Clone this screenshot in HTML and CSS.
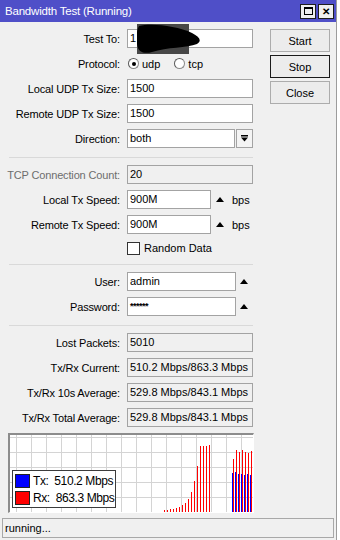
FILE: index.html
```html
<!DOCTYPE html>
<html>
<head>
    <title>Bandwidth Test (Running)</title>
    <link rel="stylesheet" href="styles.css">
</head>
<body>
    <div class="window">
        <div class="titlebar">
            <span class="title">Bandwidth Test (Running)</span>
            <div class="title-buttons">
                <span class="tb-btn"><span class="max-icon"></span></span>
                <span class="tb-btn close">&#x2715;</span>
            </div>
        </div>

        <div class="main">
            <div class="form">
                <div class="row">
                    <span class="label">Test To:</span>
                    <div class="control">
                        <div class="field full redacted">1
                            <svg class="scribble" width="66" height="31" viewBox="0 0 66 31">
                                <rect x="0" y="0" width="52" height="30" fill="#474747"/>
                                <path d="M2,2 C15,-1 40,2 55,9 C63,13 65,17 60,20 C50,24 30,23 15,28 C8,30 1,29 0,20 C-1,12 0,5 2,2 Z" fill="#000"/>
                            </svg>
                        </div>
                    </div>
                </div>
                <div class="row">
                    <span class="label">Protocol:</span>
                    <div class="control">
                        <span class="radio checked"></span><span class="radio-text">udp</span>
                        <span class="radio"></span><span class="radio-text">tcp</span>
                    </div>
                </div>
                <div class="row">
                    <span class="label">Local UDP Tx Size:</span>
                    <div class="control"><div class="field full">1500</div></div>
                </div>
                <div class="row">
                    <span class="label">Remote UDP Tx Size:</span>
                    <div class="control"><div class="field full">1500</div></div>
                </div>
                <div class="row">
                    <span class="label">Direction:</span>
                    <div class="control">
                        <div class="field select">both</div>
                        <span class="drop-btn">
                            <svg width="7" height="7" viewBox="0 0 7 7">
                                <rect x="0" y="0" width="7" height="1.5" fill="#000"/>
                                <polygon points="0,2.5 7,2.5 3.5,6.5" fill="#000"/>
                            </svg>
                        </span>
                    </div>
                </div>

                <div class="sep"></div>

                <div class="row">
                    <span class="label disabled">TCP Connection Count:</span>
                    <div class="control"><div class="field full readonly">20</div></div>
                </div>
                <div class="row">
                    <span class="label">Local Tx Speed:</span>
                    <div class="control">
                        <div class="field speed">900M</div>
                        <span class="up-arrow"></span><span class="unit">bps</span>
                    </div>
                </div>
                <div class="row">
                    <span class="label">Remote Tx Speed:</span>
                    <div class="control">
                        <div class="field speed">900M</div>
                        <span class="up-arrow"></span><span class="unit">bps</span>
                    </div>
                </div>
                <div class="row check-row">
                    <span class="label"></span>
                    <div class="control">
                        <span class="checkbox"></span><span class="check-text">Random Data</span>
                    </div>
                </div>

                <div class="sep"></div>

                <div class="row">
                    <span class="label">User:</span>
                    <div class="control">
                        <div class="field login">admin</div>
                        <span class="up-arrow short"></span>
                    </div>
                </div>
                <div class="row">
                    <span class="label">Password:</span>
                    <div class="control">
                        <div class="field login password">******</div>
                        <span class="up-arrow short"></span>
                    </div>
                </div>

                <div class="sep"></div>

                <div class="row">
                    <span class="label">Lost Packets:</span>
                    <div class="control"><div class="field full readonly">5010</div></div>
                </div>
                <div class="row">
                    <span class="label">Tx/Rx Current:</span>
                    <div class="control"><div class="field full readonly">510.2 Mbps/863.3 Mbps</div></div>
                </div>
                <div class="row">
                    <span class="label">Tx/Rx 10s Average:</span>
                    <div class="control"><div class="field full readonly">529.8 Mbps/843.1 Mbps</div></div>
                </div>
                <div class="row">
                    <span class="label">Tx/Rx Total Average:</span>
                    <div class="control"><div class="field full readonly">529.8 Mbps/843.1 Mbps</div></div>
                </div>

                <div class="graph">
                    <svg width="243" height="77" viewBox="0 0 243 77">
                        <g stroke="#d4d4d4" stroke-width="1">
                            <path d="M6.5,0V77M21.5,0V77M36.5,0V77M51.5,0V77M66.5,0V77M81.5,0V77M96.5,0V77M111.5,0V77M126.5,0V77M141.5,0V77M156.5,0V77M171.5,0V77M186.5,0V77M201.5,0V77M216.5,0V77M231.5,0V77"/>
                            <path d="M0,2.5H243M0,17.5H243M0,32.5H243M0,47.5H243M0,62.5H243"/>
                        </g>
                        <g fill="#ff0000">
                            <rect x="154" y="75" width="1" height="2"/>
                            <rect x="157" y="75" width="1" height="2"/>
                            <rect x="160" y="74" width="1" height="3"/>
                            <rect x="163" y="74" width="1" height="3"/>
                            <rect x="166" y="73" width="1" height="4"/>
                            <rect x="169" y="72" width="1" height="5"/>
                            <rect x="172" y="70" width="1" height="7"/>
                            <rect x="175" y="68" width="1" height="9"/>
                            <rect x="178" y="64" width="1" height="13"/>
                            <rect x="181" y="57" width="1" height="20"/>
                            <rect x="184" y="46" width="1" height="31"/>
                            <rect x="187" y="31" width="1" height="46"/>
                            <rect x="190" y="11" width="1" height="66"/>
                            <rect x="193" y="11" width="1" height="66"/>
                            <rect x="196" y="11" width="1" height="66"/>
                            <rect x="199" y="10" width="1" height="67"/>
                            <rect x="223" y="24" width="1" height="53"/>
                            <rect x="226" y="15" width="1" height="62"/>
                            <rect x="229" y="17" width="1" height="60"/>
                            <rect x="232" y="15" width="1" height="62"/>
                            <rect x="235" y="17" width="1" height="60"/>
                            <rect x="238" y="18" width="1" height="59"/>
                            <rect x="241" y="16" width="1" height="61"/>
                        </g>
                        <g fill="#0000ff">
                            <rect x="222" y="38" width="1" height="39"/>
                            <rect x="225" y="37" width="1" height="40"/>
                            <rect x="228" y="39" width="1" height="38"/>
                            <rect x="231" y="39" width="1" height="38"/>
                            <rect x="234" y="40" width="1" height="37"/>
                            <rect x="237" y="39" width="1" height="38"/>
                            <rect x="240" y="40" width="1" height="37"/>
                        </g>
                    </svg>
                    <div class="legend">
                        <div class="legend-item"><span class="swatch tx"></span><span class="legend-text">Tx:  510.2 Mbps</span></div>
                        <div class="legend-item"><span class="swatch rx"></span><span class="legend-text">Rx:  863.3 Mbps</span></div>
                    </div>
                </div>
            </div>

            <div class="actions">
                <button>Start</button>
                <button class="default">Stop</button>
                <button>Close</button>
            </div>
        </div>

        <div class="status">running...</div>
    </div>
</body>
</html>
```

FILE: styles.css
```css
body {
    margin: 0;
    background: #fff;
    font-family: "Liberation Sans", Arial, sans-serif;
    font-size: 11px;
    color: #000;
}

.window {
    width: 336px;
    height: 540px;
    background: #f0f0f0;
    border-right: 1px solid #9c9c9c;
    display: flex;
    flex-direction: column;
}

.titlebar {
    height: 22px;
    flex-shrink: 0;
    background: #4f4fc8;
    color: #fff;
    display: flex;
    align-items: center;
    justify-content: space-between;
    padding: 0 2px 0 5px;
}

.title {
    font-size: 11.5px;
    letter-spacing: -0.2px;
}

.title-buttons {
    display: flex;
    gap: 2px;
}

.tb-btn {
    width: 16px;
    height: 15px;
    box-sizing: border-box;
    border: 1px solid #1e1e1e;
    background: #f0f0f0;
    color: #000;
    display: flex;
    align-items: center;
    justify-content: center;
    font-size: 10px;
    font-weight: bold;
}

.max-icon {
    width: 9px;
    height: 8px;
    box-sizing: border-box;
    border: 1px solid #000;
    border-top-width: 2px;
}

.main {
    flex: 1;
    display: flex;
    padding-top: 7px;
}

.form {
    width: 253px;
    display: flex;
    flex-direction: column;
}

.row {
    display: grid;
    grid-template-columns: 120px 1fr;
    column-gap: 7px;
    align-items: center;
    height: 19px;
    margin-top: 6px;
}

.row:first-child {
    margin-top: 0;
}

.label {
    text-align: right;
    white-space: nowrap;
    letter-spacing: -0.15px;
}

.label.disabled {
    color: #6d6d6d;
}

.control {
    display: flex;
    align-items: center;
}

.field {
    height: 19px;
    box-sizing: border-box;
    border: 1px solid #a3a3a3;
    background: #fff;
    padding-left: 2px;
    line-height: 17px;
    white-space: nowrap;
    overflow: hidden;
}

.field.full { width: 126px; }
.field.select { width: 108px; }
.field.speed { width: 84px; }
.field.login { width: 109px; }

.field.readonly {
    background: #f0f0f0;
}

.field.password {
    font-size: 9px;
    font-weight: bold;
    letter-spacing: -0.5px;
}

.redacted {
    position: relative;
    overflow: visible;
}

.scribble {
    position: absolute;
    left: 9px;
    top: -6px;
}

.radio {
    width: 11px;
    height: 11px;
    box-sizing: border-box;
    border-radius: 50%;
    border: 1px solid #8a8a8a;
    border-top-color: #5a5a5a;
    border-left-color: #5a5a5a;
    background: #fff;
    margin-left: 1px;
    display: flex;
    align-items: center;
    justify-content: center;
}

.radio.checked::after {
    content: "";
    width: 4px;
    height: 4px;
    border-radius: 50%;
    background: #000;
}

.radio-text {
    margin: 0 13px 0 3px;
}

.drop-btn {
    width: 17px;
    height: 19px;
    box-sizing: border-box;
    margin-left: 1px;
    border: 1px solid #a3a3a3;
    background: #f4f4f4;
    display: flex;
    align-items: center;
    justify-content: center;
}

.up-arrow {
    width: 0;
    height: 0;
    border-left: 4.5px solid transparent;
    border-right: 4.5px solid transparent;
    border-bottom: 5px solid #000;
    margin-left: 5px;
}

.up-arrow.short {
    margin-left: 4px;
}

.unit {
    margin-left: 8px;
}

.check-row {
    height: 14px;
    margin-top: 7px;
}

.checkbox {
    width: 13px;
    height: 13px;
    box-sizing: border-box;
    border: 1px solid #333;
    background: #fff;
}

.check-text {
    margin-left: 4px;
}

.sep {
    height: 1px;
    background: #d9d9d9;
    margin: 9px 0 1px 9px;
}

.graph {
    position: relative;
    width: 246px;
    height: 80px;
    box-sizing: border-box;
    margin: 6px 0 0 8px;
    border-top: 2px solid #8c8c8c;
    border-left: 2px solid #8c8c8c;
    border-right: 1px solid #fff;
    border-bottom: 1px solid #fff;
    background: #fff;
}

.graph svg {
    display: block;
}

.legend {
    position: absolute;
    left: 2px;
    top: 35px;
    width: 104px;
    height: 38px;
    box-sizing: border-box;
    border: 1px solid #3c3c3c;
    background: #fff;
    padding: 3px 0 0 2px;
    display: flex;
    flex-direction: column;
    gap: 3px;
}

.legend-item {
    display: flex;
    align-items: center;
    height: 14px;
}

.swatch {
    width: 15px;
    height: 14px;
    box-sizing: border-box;
    border: 1px solid #222;
}

.swatch.tx { background: #0000ff; }
.swatch.rx { background: #ff0000; }

.legend-text {
    margin-left: 3px;
    font-size: 12px;
    white-space: pre;
    letter-spacing: -0.4px;
}

.actions {
    margin-left: 17px;
    display: flex;
    flex-direction: column;
    gap: 3px;
}

button {
    width: 60px;
    height: 23px;
    border: 1px solid #acacac;
    background: #ececec;
    font-family: inherit;
    font-size: 11px;
    color: #000;
    padding: 0;
}

button.default {
    border-color: #1a1a1a;
}

.status {
    flex-shrink: 0;
    height: 20px;
    box-sizing: border-box;
    margin: 0 2px 2px 2px;
    border: 1px solid #a8a8a8;
    padding-left: 2px;
    line-height: 18px;
}
```
